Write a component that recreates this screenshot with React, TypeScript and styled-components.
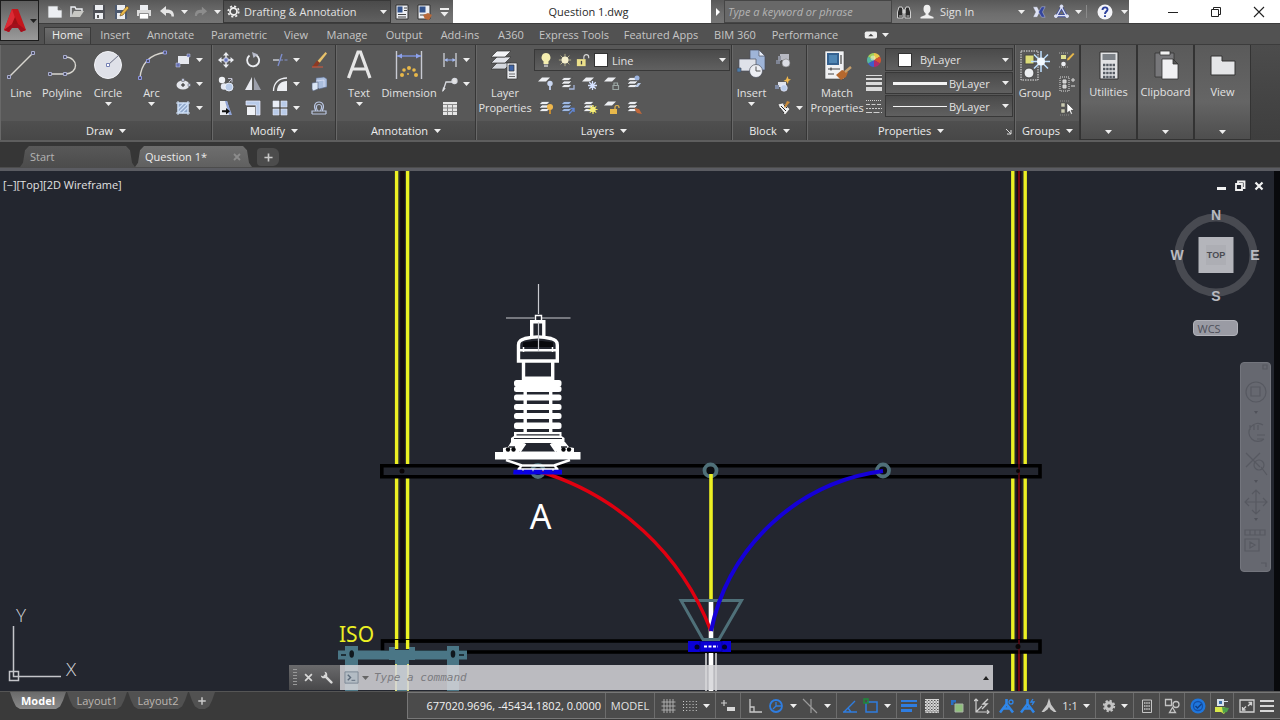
import React from 'react';
import styled, { createGlobalStyle, css } from 'styled-components';

const GlobalStyle = createGlobalStyle`
  *, *::before, *::after { box-sizing: border-box; }
  html, body { margin: 0; background: #3a3a3a; }
  body, button, input, select {
    font-family: "Open Sans", "Noto Sans", sans-serif;
    font-size: 11px;
    line-height: 15px;
    color: #e2e2e2;
  }
  button, input, select { margin: 0; padding: 0; border: 0; background: none; border-radius: 0; }
  button { display: flex; align-items: center; justify-content: center; flex: none; }
  svg { display: block; flex: none; }
`;

/* ---------- icons ---------- */

const W = '#eceef2';
const B = '#b9cbe8';
const G = '#c9c9c9';
const Y = '#e8b84a';

const stack = (top: string) => (
  <g fill={top} stroke="#2e2e2e" strokeWidth=".5">
    <path d="M4 9.500h8l-3 3H1z" />
    <path d="M4 6h8l-3 3H1z" />
    <path d="M4 2.500h8l-3 3H1z" />
  </g>
);

const art: Record<string, React.ReactNode> = {
  newFile: <path d="M1 2h10l4 4v8H1z M11 2v4h4" fill={W} stroke="#777" strokeWidth=".7" />,
  open: (
    <g>
      <path d="M2 13V3h4l1 2h6v2" fill="none" stroke={W} strokeWidth="1.400" />
      <path d="M2 13l3-6h10l-4 6z" fill="#c8c8c4" />
    </g>
  ),
  save: (
    <g>
      <path d="M2 1h12v14H2z" fill="#4d4f55" />
      <path d="M4 1h8v5H4z M4 9h8v6H4z" fill={W} />
      <path d="M6 11h2v3H6z" fill="#555" />
    </g>
  ),
  saveAs: (
    <g>
      <path d="M2 1h12v14H2z" fill="#4d5a70" />
      <path d="M4 1h8v5H4z M4 9h8v6H4z" fill={W} />
      <path d="M7 12l1-3 6-7 2 2-6 7z" fill={Y} stroke="#6b4a18" strokeWidth=".6" />
    </g>
  ),
  print: (
    <g>
      <path d="M4 1h8v5H4z" fill={W} />
      <path d="M1 6h14v6H1z" fill="#dcdcdc" />
      <path d="M3.500 9.500h9V15h-9z" fill="#fff" stroke="#777" strokeWidth=".8" />
    </g>
  ),
  undo: <path d="M1 7l6-5v3.500c5 0 8 1 8 7h-2.500c0-3-2-3.500-5.500-3.500v3z" fill="#e4e4e4" />,
  redo: <path d="M15 7L9 2v3.500c-5 0-8 1-8 7h2.500c0-3 2-3.500 5.500-3.500v3z" fill="#8c8c8c" />,
  gear: (
    <g fill="none" stroke="#eee">
      <circle cx="8" cy="8" r="4.300" strokeWidth="2.200" />
      <circle cx="8" cy="8" r="6.500" strokeWidth="2" strokeDasharray="2.600 2.500" />
    </g>
  ),
  gearSolid: (
    <g fill="none" stroke="#c4c4c4">
      <circle cx="8" cy="8" r="3.300" strokeWidth="3" />
      <circle cx="8" cy="8" r="5.200" strokeWidth="2" strokeDasharray="2.200 1.880" />
    </g>
  ),
  sheet: (
    <g>
      <path d="M2 1h12v14H2z" fill={W} stroke="#333" />
      <path d="M3.500 2.500h5v6h-5z" fill="#33538c" />
      <path d="M10 4h3M10 6.500h3M4 10.500h8M4 13h8" stroke="#444" />
    </g>
  ),
  sheetBrush: (
    <g>
      <path d="M2 1h12v14H2z" fill={W} stroke="#333" />
      <path d="M3.500 2.500h6v6h-6z" fill="#33538c" />
      <path d="M4 11h5" stroke="#444" />
      <path d="M7 11l5-2 4 2-3 5-4-1z" fill="#b8693a" />
    </g>
  ),
  dropBar: <path d="M4 4h9v2H4z M4.500 8h8l-4 4.500z" fill="#eee" />,
  binoculars: (
    <g fill="#2c2c2c" stroke="#d0d0d0">
      <path d="M3 3h3l1 3v8H1.500V8z M10 3h3l1.500 5v6H9V6z" />
      <path d="M7 6h2v3H7z" fill="#d0d0d0" />
      <path d="M3 12h3M10.500 12h3" />
    </g>
  ),
  person: (
    <g fill="#eee">
      <ellipse cx="8" cy="5" rx="3.500" ry="4.200" />
      <path d="M6.500 8h3v3l5 2v1.500h-13V13l5-2z" />
    </g>
  ),
  exchange: (
    <g>
      <path d="M1 2h5l3 6-3 6H1l3-6z" fill="#dfe3f5" stroke="#555" strokeWidth=".5" />
      <path d="M15 2h-4L7.500 8l3.500 6h4l-3-6z" fill="#34459c" stroke="#cdd3ee" strokeWidth=".5" />
    </g>
  ),
  a360: (
    <g fill="none" stroke="#dfe3f5">
      <path d="M8 3.500L13 12.500H3z" strokeWidth="3" stroke="#3c4ca0" />
      <path d="M8 3.500L13 12.500H3z" strokeWidth="1.300" />
      <circle cx="8" cy="2.500" r="1.500" fill="#dfe3f5" />
      <circle cx="2" cy="13" r="1.500" fill="#dfe3f5" />
      <circle cx="14" cy="13" r="1.500" fill="#dfe3f5" />
    </g>
  ),
  help: (
    <g>
      <circle cx="8" cy="8" r="7.500" fill="#f4f4f8" />
      <path d="M5.500 6c0-3.500 5.500-3.300 5-.3C10.300 7.500 8 7.700 8 10M8 11.300v1.700" fill="none" stroke="#2b3f9b" strokeWidth="1.900" />
    </g>
  ),
  rectangle: (
    <g>
      <path d="M3 4h11v8H3z" fill="#e6e8ee" />
      <path d="M1 11h4v4H1z M12 2h3v3h-3z" fill="#6770b0" stroke="#c9d0f0" strokeWidth=".5" />
    </g>
  ),
  ellipse: (
    <g>
      <ellipse cx="8" cy="9" rx="6.500" ry="4.500" fill="#e4e6ec" />
      <path d="M6 9h4M8 7v4" stroke="#222" />
      <path d="M6.800 2.500h2.400v3H6.800z M13 7.800h2.500v2.500H13z" fill="#cfd6f0" stroke="#555" strokeWidth=".5" />
    </g>
  ),
  hatch: (
    <g stroke="#cfe0f7">
      <path d="M3 3h10v10H3z" fill="#8ea6c9" />
      <path d="M3 9l6-6M3 13L13 3M7 13l6-6" strokeWidth="1.200" />
      <path d="M1 3h14M1 13h14M3 1v14M13 1v14" />
    </g>
  ),
  move: (
    <g fill="#eceef2">
      <path d="M8 0l3 3.500H5z M8 16l3-3.500H5z M0 8l3.500-3v6z M16 8l-3.500-3v6z" />
      <path d="M7.300 3h1.400v10H7.300z M3 7.300h10v1.400H3z" />
      <path d="M6 6h4v4H6z" fill="#6a78c0" stroke="#dfe3f5" strokeWidth=".7" />
    </g>
  ),
  rotate: (
    <g fill="none">
      <path d="M4.500 3.500A6 6 0 1 0 11 3" stroke={W} strokeWidth="1.800" />
      <path d="M7 0l6 2.500L8.500 6z" fill="#b8bccb" />
    </g>
  ),
  trim: (
    <g fill="none">
      <path d="M1 8h6" stroke="#d6dae4" strokeWidth="1.300" />
      <path d="M8 8h8" stroke="#8090c8" strokeDasharray="3 1.500" />
      <path d="M6 14L10 2" stroke="#7f8fd0" strokeWidth="1.300" />
    </g>
  ),
  erase: (
    <g>
      <path d="M14.500 0L16 1.500 8.500 11 6.500 9z" fill="#e8c26a" />
      <path d="M6 8.500l3 2.500-3 3.500-5 .5z" fill="#8c3a24" />
      <path d="M1 15h11" stroke="#d8563a" />
    </g>
  ),
  copy: (
    <g>
      <circle cx="4" cy="4" r="3.200" fill="#f0f2f6" />
      <circle cx="6" cy="10.500" r="3.200" fill="#e4e8f2" />
      <circle cx="11" cy="11" r="4" fill={B} stroke="#f2f6ff" strokeWidth=".8" />
      <path d="M10 2.500h4v4M14 3l-3 3" fill="none" stroke="#ccd" strokeWidth=".9" />
    </g>
  ),
  mirror: (
    <g>
      <path d="M7 1v13H0z" fill="#e8eaf0" />
      <path d="M9 1v13h7z" fill="#9c9fab" />
    </g>
  ),
  fillet: (
    <g>
      <path d="M15 15H5C5 9 9 5 15 5z" fill="#eceef2" />
      <path d="M1.500 15C1.500 7 7 2 15 2" fill="none" stroke={W} strokeWidth="1.300" />
    </g>
  ),
  explode: (
    <g stroke="#54607a" strokeWidth=".6">
      <path d="M5 2l8-1 3 2v8l-8 2-3-3z" fill="#a9bddd" />
      <path d="M1 7l6-1v7l-5 2-1-2z" fill="#dbe6f6" />
      <path d="M5 5l8-1v7" fill="none" stroke="#eef" />
    </g>
  ),
  stretch: (
    <g>
      <path d="M2 1h7l4 14H2z" fill="#e9ebf0" />
      <path d="M9 1l5 14h-3L7 1z" fill="#8fa3d6" />
      <path d="M4 10.300h4V8l4 3.300L8 14.500v-2.200H4z" fill="#111" />
    </g>
  ),
  scale: (
    <g>
      <path d="M1 1h14v14h-4V5H1z" fill={B} stroke="#eef" strokeWidth=".7" />
      <path d="M2 7h8v8H2z" fill="#f0f2f6" />
    </g>
  ),
  array: (
    <g fill={B} stroke="#e4eaf8" strokeWidth=".6">
      <path d="M1 1h6v6H1z" fill="#e9edf5" />
      <path d="M9 1h6v6H9z M1 9h6v6H1z M9 9h6v6H9z" />
    </g>
  ),
  offset: (
    <g fill="none" stroke="#b9c6e2" strokeWidth="1.200">
      <path d="M1 14h14M1 14v-3h4C2 6 4 2 8 2s6 4 3 9h4v3" />
      <path d="M6.500 11C4 6 6 4.500 8 4.500S12 6 9.500 11z" />
    </g>
  ),
  linearDim: (
    <g fill="none" strokeWidth="1.200">
      <path d="M2 1v14M14 1v14" stroke="#d8dae0" />
      <path d="M3 8h10" stroke="#8aa3e8" />
      <path d="M2.500 8l3-2v4z M13.500 8l-3-2v4z" fill="#a8bbf0" />
    </g>
  ),
  leader: (
    <g fill="none" stroke="#d8dae0" strokeWidth="1.300">
      <path d="M1 15l3-9h7" />
      <circle cx="12.500" cy="5" r="2.500" fill="#e4e4e4" />
      <path d="M.5 15.500l.8-4 2 1z" fill="#e4e4e4" strokeWidth=".5" />
    </g>
  ),
  table: (
    <g>
      <path d="M1 2h14v13H1z" fill="#e6e6e6" />
      <path d="M1 4.500h14M1 8h14M1 11.500h14M5.500 5v10M10.500 5v10" stroke="#8a8a8a" />
    </g>
  ),
  bulb: (
    <g>
      <path d="M8 1a4.500 4.500 0 0 1 2.500 8.200V12h-5V9.200A4.500 4.500 0 0 1 8 1z" fill="#f6efb0" />
      <path d="M6 12.500h4v2.500H6z" fill="#b0b0b0" />
    </g>
  ),
  sun: (
    <g>
      <path d="M8 1v14M1 8h14M3 3l10 10M13 3L3 13" stroke="#b8b48c" strokeWidth="1.100" />
      <circle cx="8" cy="8" r="4" fill="#f6f0cc" />
    </g>
  ),
  lock: (
    <g>
      <path d="M9 7V4.500C9 1 14.500 1 14.500 4.500V6" fill="none" stroke="#d8d8d8" strokeWidth="1.300" />
      <path d="M1 7h10v8H1z" fill="#ece08a" />
      <path d="M5.500 9H7v4H5.500z" fill="#444" />
    </g>
  ),
  layOff: (
    <g>
      <path d="M4 2.500h8l-4 4H0z" fill={W} />
      <circle cx="12" cy="8.500" r="2.700" fill="#c9d6f0" />
      <path d="M11 11h2v4h-2z" fill="#b5c3e0" />
    </g>
  ),
  layIso: <g>{stack(W)}<path d="M14 10v4H9" fill="none" stroke="#a7b6da" strokeWidth="1.300" /></g>,
  layFreeze: (
    <g>
      <path d="M4 2.500h8l-4 4H0z" fill={W} />
      <path d="M10.500 6v9M6 10.500h9M7.300 7.300l6.400 6.400M13.700 7.300l-6.400 6.400" stroke="#d5e2ff" strokeWidth="1.300" />
    </g>
  ),
  layLock: (
    <g>
      <path d="M4 2.500h8l-4 4H0z" fill={W} />
      <path d="M10 10.500V8h3.500v2.500M9 10.500h5.500v4H9z" fill="none" stroke="#9aa6a3" strokeWidth="1.200" />
    </g>
  ),
  layCurrent: <g>{stack(W)}<circle cx="11" cy="3" r="2.500" fill="#9bb2dd" /><path d="M12 8h3l-3 4H9" fill={B} /></g>,
  layOn: <g>{stack(W)}<circle cx="12" cy="8" r="3" fill="#f0b74c" /><path d="M11 11h2v4h-2z" fill="#c48a30" /></g>,
  layUniso: <g>{stack('#9fb9e4')}<path d="M9 15l5-5M10.500 9.500H14V13" fill="none" stroke="#5f86d8" strokeWidth="1.400" /></g>,
  layThaw: (
    <g>
      {stack(W)}
      <path d="M11 6v9M6.500 10.500h9M7.800 7.300l6.400 6.400M14.200 7.300l-6.400 6.400" stroke="#f0e45c" strokeWidth="1.200" />
      <circle cx="11" cy="10.500" r="2.700" fill="#f7ef7a" />
    </g>
  ),
  layUnlock: (
    <g>
      <path d="M4 2.500h8l-4 4H0z" fill={W} />
      <path d="M11 10V8c0-2 4-2 4 0v1" fill="none" stroke={Y} strokeWidth="1.200" />
      <path d="M6 10h7v5H6z" fill={Y} />
    </g>
  ),
  layMatch: <g>{stack(W)}<path d="M8 9l5 1 3 5-5-1z" fill="#c0673a" /></g>,
  createBlock: (
    <g>
      <path d="M5 2h9v6H5z" fill="#b7b9c2" />
      <path d="M1 8h4v4H1z" fill="#7e8494" />
      <circle cx="11" cy="11" r="4" fill="#dcdde4" stroke="#777" strokeWidth=".6" />
      <path d="M3 4h3v5H3z" fill="#8f93a0" />
    </g>
  ),
  editBlock: (
    <g>
      <path d="M3 6h8v5H3z" fill="#dfe2ea" />
      <path d="M0 9h4v4H0z" fill="#7e8aa4" />
      <circle cx="9" cy="12" r="3.300" fill={B} stroke="#eef" strokeWidth=".6" />
      <path d="M12.500 0l1 3 2.500.5-2.500 1.500-.5 3-1.500-2.500L8.500 5l2.500-1.500z" fill="#f0b74c" />
    </g>
  ),
  attributes: (
    <g>
      <path d="M3 4l5-1 7 6-5 6-5-6z" fill="#f0f0f0" stroke="#333" strokeWidth=".6" />
      <path d="M6 6l5 5M8.500 4.500L12 8M5 8l4 5" stroke="#222" />
      <path d="M12 1l3 1-5 6-1-1z" fill="#c98a3a" />
    </g>
  ),
  colorWheel: (
    <g>
      <path d="M8 8V1a7 7 0 0 1 6 3.500z" fill="#e8c84a" />
      <path d="M8 8l6-3.500a7 7 0 0 1 0 7z" fill="#d8542f" />
      <path d="M8 8l6 3.500A7 7 0 0 1 8 15z" fill="#b02a6c" />
      <path d="M8 8v7a7 7 0 0 1-6-3.500z" fill="#3e5ecc" />
      <path d="M8 8l-6 3.500a7 7 0 0 1 0-7z" fill="#55b6a2" />
      <path d="M8 8L2 4.500A7 7 0 0 1 8 1z" fill="#9fcf5a" />
      <circle cx="7" cy="6" r="2.500" fill="#fff" opacity=".45" />
    </g>
  ),
  weight: <path d="M0 0h16v1H0z M0 3h16v2H0z M0 7h16v3H0z M0 12h16v4H0z" fill="#dadada" />,
  linetype: (
    <g stroke="#cfcfcf">
      <path d="M0 2.500h16" strokeDasharray="1 1" />
      <path d="M0 6.500h16" strokeDasharray="4 1.500" />
      <path d="M0 10.500h16" strokeDasharray="2 1" />
      <path d="M0 14.500h16" strokeDasharray="6 1.500" />
    </g>
  ),
  groupEdit: (
    <g>
      <path d="M2 3h5v4H2z" fill="#dfe090" />
      <circle cx="4.500" cy="12" r="2.300" fill={W} />
      <path d="M0 1h9M0 15h9" stroke="#aaa" strokeDasharray="1 1" />
      <path d="M15.500 2L10 8l-2 .5.500-2L14 1z" fill={Y} />
    </g>
  ),
  groupAdd: (
    <g fill="none" stroke="#ddd">
      <path d="M1 1h9v14H1z" strokeDasharray="1 1" />
      <path d="M4 4h3v3H4z M4 9h3v3H4z" fill="#ccc" />
      <path d="M12 4h4M14 2v4M12 10h4" />
    </g>
  ),
  groupSelect: (
    <g>
      <path d="M1 1h9M1 15h9" stroke="#888" strokeDasharray="1 1" />
      <path d="M2 3h4v4H2z M2 9h4v4H2z" fill="#c9c9b0" stroke="#444" strokeWidth=".5" />
      <path d="M8 3l7 7-3 .3 1.500 3.500-1.500.6L10.500 11 8 13z" fill="#fff" stroke="#333" strokeWidth=".5" />
    </g>
  ),
  wrench: (
    <g>
      <path d="M6 6l8 8" stroke="#d8d8d8" strokeWidth="3" strokeLinecap="round" />
      <path d="M5.500 1A4 4 0 1 1 1 5.500l2.500 1 2.500-.5.500-2.500z" fill="#d8d8d8" />
    </g>
  ),
  close: <path d="M2 2l12 12M14 2L2 14" stroke="#d8d8d8" strokeWidth="3" />,
  prompt: (
    <g fill="none" stroke="#5c6a7a">
      <path d="M1 2h14v12H1z" fill="#b3bcc4" stroke="#7c8894" />
      <path d="M4 5l3 3-3 3" strokeWidth="1.500" />
      <path d="M8 11h4" />
    </g>
  ),
  grid: <path d="M4 1v14M7 1v14M10 1v14M13 1v14M1.500 4h14M1.500 8h14M1.500 12h14" stroke="#b4b4b4" strokeWidth=".9" />,
  snap: (
    <path d="M1 3.500h14M1 6.500h14M1 9.500h14M1 12.500h14" stroke="#cfcfcf" strokeDasharray="1 2.200" />
  ),
  infer: (
    <g>
      <path d="M1 5h6M4 2v6" stroke="#ccc" strokeWidth="1.200" />
      <path d="M7 9h8v4H7z" fill="#d8d8d8" />
    </g>
  ),
  ortho: <path d="M3 1v13h12M3 9h4v5" fill="none" stroke={G} strokeWidth="1.300" />,
  polar: (
    <g fill="none" stroke="#2f7de0" strokeWidth="1.800">
      <circle cx="8" cy="8" r="6" />
      <path d="M8 4v4h6M8 8l-3 3" strokeWidth="1.300" />
    </g>
  ),
  isodraft: <path d="M1 1l14 14M9 1v14" fill="none" stroke="#9a9a9a" strokeWidth="1.200" />,
  track: <path d="M1 14h14M2 14L13 3M9 14l-3-4" fill="none" stroke="#2f7de0" strokeWidth="1.400" />,
  osnap: (
    <g fill="none">
      <path d="M4 4h10v10H3V5" stroke="#2f7de0" strokeWidth="1.500" />
      <path d="M1 1h4v4H1z" stroke="#1f8a3c" strokeWidth="1.500" />
    </g>
  ),
  lwt: <path d="M0 2h16v2H0z M0 6h16v3H0z M0 11h11v3H0z" fill="#2f7de0" />,
  transparency: (
    <g>
      <path d="M1 1h14v14H1z" fill="#d6d6d6" />
      <path d="M1 2.500h14M1 5.500h14M1 8.500h14M1 11.500h14M1 14h14" stroke="#555" strokeDasharray="1.500 1.500" />
      <path d="M2.500 4h12.500M2.500 7h12.500M2.500 10h12.500M2.500 13h12.500" stroke="#777" strokeDasharray="1.500 1.500" />
    </g>
  ),
  cycling: (
    <g>
      <path d="M6 6h8v8H6z" fill="#8fbf7c" stroke="#a9b4a4" />
      <path d="M2 2h5v2.500H4.500V7H2z" fill="#2a6fc4" />
    </g>
  ),
  ducs: (
    <g fill="none" stroke="#cfcfcf">
      <path d="M2 1v13h13M0 3l2-2 2 2M13 12l2 2-2 2M2 14L8 8" strokeWidth="1.200" />
      <path d="M14 1l-5 5h4l-5 5" strokeWidth="1.400" />
    </g>
  ),
  annoVis: (
    <g stroke="#2f86e8" strokeWidth="2.600" fill="none">
      <path d="M7.500 1v6M7.500 6L1 14.500M7.500 6L14 14.500M4 10.500h7" />
      <circle cx="12" cy="4" r="2" strokeWidth="1.300" />
    </g>
  ),
  annoAuto: (
    <g stroke="#2f86e8" strokeWidth="2.600" fill="none">
      <path d="M7.500 1v6M7.500 6L1 14.500M7.500 6L14 14.500M4 10.500h7" />
      <path d="M13 1l-2 3h3l-2 3" strokeWidth="1.300" />
    </g>
  ),
  annoScale: <path d="M8 0l2 6.500L15.500 14H13l-3.500-2.500L8 9l-1.500 2.500L3 14H.5L6 6.500z" fill="#c6c6c6" />,
  units: (
    <g stroke="#c4c4c4" fill="none">
      <path d="M3.500 2h9v12.500h-9z" />
      <path d="M5 5h6M5 8h6M5 11h6" strokeDasharray="1.500 .7" strokeWidth="1.500" />
    </g>
  ),
  isolate: (
    <g fill="none" stroke="#c4c4c4" strokeWidth="1.300">
      <path d="M1.500 1.500h6v6h-6z M5.500 14.500l3-5 3 5z" />
      <circle cx="12" cy="6.500" r="3" />
    </g>
  ),
  hardware: (
    <g>
      <circle cx="8" cy="8" r="7.500" fill="#1f76dc" />
      <circle cx="8" cy="8" r="4.500" fill="none" stroke="#1450a8" strokeWidth="1.300" />
      <path d="M5.500 8l2 2 4-4" fill="none" stroke="#123f84" strokeWidth="1.500" />
    </g>
  ),
  plotter: (
    <g>
      <path d="M3 1h7v7H3z" fill="#d6e0ea" />
      <path d="M5 3h3v3H5z" fill="#3b6ea8" />
      <path d="M9 3.500h5" stroke="#d6e0ea" />
      <path d="M1 9h9l3 2-3 5-3-2H1z" fill="#d8e84a" />
      <path d="M8 9l7 1-2 4-4 1z" fill="#4ea04a" />
    </g>
  ),
  clean: (
    <g fill="none" stroke="#d2d2d2" strokeWidth="1.300">
      <path d="M1 2h14v12H1z" />
      <path d="M9 8l3.500-3.500M9.500 4.500h3v3M7 8.500L3.500 12M3.500 9v3h3" />
    </g>
  ),
  menu: <path d="M1 3h14M1 8h14M1 13h14" stroke="#d6d6d6" strokeWidth="2" />,
  winMin: <path d="M3 8.500h10" stroke="#222" />,
  winMax: <path d="M3.500 5.500h7v7h-7z M5.500 5.500v-2h7v7h-2" fill="none" stroke="#222" />,
  winClose: <path d="M3 3l10 10M13 3L3 13" stroke="#222" strokeWidth="1.100" />,
  docMin: <path d="M4 9h9v3H4z" fill="#f2f2f2" />,
  docMax: (
    <path d="M4 6h6v6H4z M6 5V3.500h6.500v6.500H11" fill="none" stroke="#f2f2f2" strokeWidth="1.800" />
  ),
  docClose: <path d="M4.500 4.500l7 7M11.500 4.500l-7 7" stroke="#f2f2f2" strokeWidth="2.200" />,
  plus: <path d="M8 3v10M3 8h10" stroke="#c9c9c9" strokeWidth="2" />,
  record: (
    <g>
      <path d="M4 4h10a2 2 0 0 1 2 2v4a2 2 0 0 1-2 2H4a2 2 0 0 1-2-2V6a2 2 0 0 1 2-2z" fill="#eee" />
      <path d="M6 9.500L9 6.500l3 3z" fill="#444" />
    </g>
  ),
};

const bigArt: Record<string, React.ReactNode> = {
  line: (
    <g fill="#4c4f68" stroke="#a9adcf">
      <path d="M4 28L28 4" stroke="#d8d6cf" strokeWidth="1.400" />
      <path d="M2.500 26.500h3v3h-3z M26.500 2.500h3v3h-3z" />
    </g>
  ),
  polyline: (
    <g fill="#4c4f68" stroke="#a9adcf">
      <path d="M4 25h15c14 0 14-17 0-17" fill="none" stroke="#d8d6cf" strokeWidth="1.400" />
      <path d="M2.500 23.500h3v3h-3z M17.500 23.500h3v3h-3z M17.500 6.500h3v3h-3z" />
    </g>
  ),
  circle: (
    <g>
      <circle cx="16" cy="16" r="13.500" fill="#dfe1e8" stroke="#f3f4f8" />
      <path d="M16 16L27 6" stroke="#6c7086" />
      <path d="M14.500 14.500h3v3h-3z" fill="#fff" stroke="#7480b4" />
    </g>
  ),
  arc: (
    <g fill="#4c4f68" stroke="#8d96e0">
      <path d="M4 29C5 15 14 5 29 3.500" fill="none" stroke="#d8d6cf" strokeWidth="1.400" />
      <path d="M2.500 27.500h3v3h-3z M10.500 10.500h3v3h-3z M27.500 2h3v3h-3z" />
    </g>
  ),
  text: <path d="M5.500 29L15 3h2.500L27 29M9 20h14.500" fill="none" stroke="#e6e6e6" strokeWidth="3.200" />,
  dimension: (
    <g>
      <path d="M3.500 2v28M28.500 2v28" stroke="#c8cad2" strokeWidth="1.400" />
      <path d="M4 7h24" stroke="#7d92e0" strokeWidth="1.400" />
      <path d="M4 7l5-2.500v5z M28 7l-5-2.500v5z" fill="#8ea2ea" />
      <g fill={Y}>
        <circle cx="16" cy="19" r="2" /><circle cx="11" cy="21" r="1.800" /><circle cx="21" cy="21" r="1.800" />
        <circle cx="9" cy="26" r="2" /><circle cx="23" cy="26" r="2" /><circle cx="15" cy="25" r="1" />
      </g>
    </g>
  ),
  layers: (
    <g stroke="#333" strokeWidth=".7">
      <path d="M8 14h14l-6 6H2z" fill="#d5d8de" />
      <path d="M8 8h14l-6 6H2z" fill="#e2e4ea" />
      <path d="M8 2h14l-6 6H2z" fill="#f2f3f6" />
      <path d="M18 14h10v16H18z" fill="#e8eaee" />
      <path d="M20 16h5v6h-5z" fill="#3e64a8" />
      <path d="M20 25h6M20 27.500h6" stroke="#333" />
    </g>
  ),
  insert: (
    <g stroke="#4a4f5c" strokeWidth=".7">
      <path d="M14 1h9l6 6v14H14z" fill="#9fb5d8" />
      <path d="M23 1v6h6z" fill="#e8eefa" />
      <path d="M3 10h17v12H3z" fill="#dfe2e9" />
      <path d="M1 19h4v4H1z" fill="#4b7ca8" />
      <circle cx="20" cy="22" r="6.500" fill="#eceef3" />
      <path d="M20 22v-4.500M20 22h4.500" stroke="#555" strokeWidth="1" />
    </g>
  ),
  match: (
    <g>
      <path d="M4 2h19v28H4z" fill="#f0f1f3" stroke="#444" strokeWidth=".6" />
      <path d="M6 4h12v12H6z" fill="#35618f" />
      <path d="M8 6h8v8H8z" fill="#4f86b4" />
      <path d="M20 6v9M7 20h12M10 18.500v3M7 25h6" stroke="#444" strokeWidth="1.200" />
      <path d="M15 26l6-5 6 2-2 5-5 3z" fill="#b5682e" />
      <path d="M24 23l6-5" stroke="#c8a06c" strokeWidth="2.400" />
    </g>
  ),
  group: (
    <g>
      <path d="M2 2h17v29H2z" fill="none" stroke="#e2e2e2" strokeDasharray="1.500 1" />
      <path d="M6 6h9v9H6z" fill="#dcdc78" stroke="#444" />
      <circle cx="10" cy="24" r="5" fill="#eceef0" stroke="#444" />
      <path d="M22 2v21M12 12.500h19M15 5.500l14 14M29 5.500l-14 14" stroke="#bfe0ff" strokeWidth="1.500" />
      <circle cx="22" cy="12.500" r="4" fill="#f2f9ff" />
    </g>
  ),
  utilities: (
    <g>
      <path d="M7 2h18v27H7z" fill="#e2e3e5" stroke="#333" />
      <path d="M9.500 4h13v6h-13z" fill="#7d8288" />
      <path d="M10 15h12M10 19h12M10 23h12M10 27h12" stroke="#555b63" strokeWidth="2.400" strokeDasharray="2.400 .8" />
    </g>
  ),
  clipboard: (
    <g stroke="#333" strokeWidth=".8">
      <path d="M5 3h19v24H5z" fill="#77777a" />
      <path d="M10 1h10v4H10z" fill="#f2f2f2" />
      <path d="M12 9h11l5 5v15H12z" fill="#f1f1f3" />
      <path d="M23 9v5h5z" fill="#555" />
    </g>
  ),
  view: <path d="M4 6h11v5h13v14H4z" fill="#e4e5e7" stroke="#333" />,
};

const Icon = ({ name, size = 16 }: { name: string; size?: number }) => (
  <svg width={size} height={size} viewBox="0 0 16 16" aria-hidden="true">{art[name]}</svg>
);
const BigIcon = ({ name }: { name: string }) => (
  <svg width="32" height="32" viewBox="0 0 32 32" aria-hidden="true">{bigArt[name]}</svg>
);
const Caret = ({ color = '#eee' }: { color?: string }) => (
  <svg width="7" height="4" viewBox="0 0 7 4" aria-hidden="true"><path d="M0 0h7L3.500 4z" fill={color} /></svg>
);

/* ---------- page frame ---------- */

const Page = styled.div`
  display: flex;
  flex-direction: column;
  min-height: 100vh;
  min-width: 1080px;
`;

const Header = styled.header`
  display: flex;
  align-items: flex-start;
  background: #525252;
`;

const AppButton = styled.button`
  width: 39px;
  height: 41px;
  gap: 3px;
  background: linear-gradient(#5e5e5e, #9a9a9a);
  border: 1px solid #1c1c1c;
`;

const HeaderRows = styled.div`
  flex: 1;
  min-width: 0;
`;

const TitleBar = styled.div`
  display: flex;
  align-items: stretch;
  height: 24px;
  background: linear-gradient(#585858, #6e6e6e 60%, #757575);
  border-bottom: 1px solid #3c3c3c;
`;

const QuickAccess = styled.div`
  display: flex;
  align-items: center;
  padding-left: 5px;
`;

const QuickButton = styled.button<{ $w?: number }>`
  width: ${(p) => p.$w ?? 22}px;
  height: 23px;
`;

const Divider = styled.span`
  width: 1px;
  height: 13px;
  margin: 5px 4px;
  background: #8a8a8a;
`;

const Combo = styled.label<{ $w?: number; $h: number; $gap?: number; $pad?: number }>`
  display: flex;
  align-items: center;
  gap: ${(p) => p.$gap ?? 4}px;
  ${(p) => p.$w && css`width: ${p.$w}px;`}
  height: ${(p) => p.$h}px;
  padding: 0 3px 0 ${(p) => p.$pad ?? 3}px;
  background: linear-gradient(#4a4a4a, #606060);
  border: 1px solid #383838;
`;

const Select = styled.select`
  appearance: none;
  flex: 1;
  min-width: 0;
  height: 100%;
  outline: none;
`;

const DocTitle = styled.h1`
  flex: 1;
  margin: 0;
  padding-left: 13px;
  background: #fff;
  color: #2a2a2a;
  font-size: 11px;
  font-weight: 400;
  line-height: 24px;
  text-align: center;
`;

const SearchInput = styled.input`
  width: 168px;
  padding: 0 3px;
  background: #686868;
  border: 1px solid #454545;
  font-style: italic;
  outline: none;
  &::placeholder { color: #b4b4b4; opacity: 1; }
`;

const SignIn = styled.button`
  width: 114px;
  gap: 5px;
  justify-content: flex-start;
  padding: 0 5px 0 3px;
  & > span { flex: 1; text-align: left; }
`;

const WindowControls = styled.div`
  display: flex;
  justify-content: flex-end;
  width: 151px;
  background: #fff;
`;

const WindowButton = styled.button`
  width: 43px;
  height: 23px;
`;

const RibbonTabs = styled.nav`
  display: flex;
  align-items: flex-end;
  height: 20px;
  padding-left: 5px;
`;

const RibbonTab = styled.button<{ $w: number; $active?: boolean }>`
  width: ${(p) => p.$w}px;
  height: 17px;
  padding-bottom: 3px;
  color: #c6c6c6;
  border: 1px solid transparent;
  border-bottom: 0;
  ${(p) => p.$active && css`
    color: #eee;
    background: linear-gradient(#6c6c6c, #585858);
    border-color: #3a3a3a;
  `}
`;

/* ---------- ribbon ---------- */

const Ribbon = styled.div`
  display: flex;
  background: linear-gradient(#4c4c4c, #3e3e3e);
  border-top: 1px solid #3c3c3c;
  border-bottom: 2px solid #5e5e5e;
`;

const Panel = styled.section<{ $w: number }>`
  display: flex;
  flex-direction: column;
  width: ${(p) => p.$w}px;
  flex: none;
  background: #585858;
  border-left: 1px solid #686868;
  border-right: 1px solid #363636;
`;

const PanelBody = styled.div`
  display: flex;
  height: 76px;
`;

const PanelTitle = styled.button`
  position: relative;
  width: 100%;
  height: 19px;
  gap: 6px;
  color: #ececec;
  background: linear-gradient(#4f4f4f, #474747);
`;

const Launcher = styled.span`
  position: absolute;
  right: 2px;
  bottom: 5px;
`;

const BigTool = styled.button<{ $w: number }>`
  flex-direction: column;
  justify-content: flex-start;
  width: ${(p) => p.$w}px;
  padding-top: 4px;
  white-space: pre-line;
  & > span { margin: 4px 0 2px; }
`;

const ToolColumns = styled.div`
  display: flex;
  padding-top: 3px;
`;

const SmallTool = styled.button<{ $caret?: boolean }>`
  justify-content: flex-start;
  gap: 5px;
  width: ${(p) => (p.$caret ? 39 : 27)}px;
  height: 24px;
  padding-left: 5px;
`;

const LayerStack = styled.div`
  display: flex;
  flex-direction: column;
  padding: 4px 0 0 1px;
`;

const LayerRow = styled.div`
  display: flex;
  padding-left: 1px;
`;

const LayerTool = styled.button`
  width: 22px;
  height: 24px;
`;

const PropertyList = styled.div`
  display: flex;
  flex-direction: column;
  gap: 1px;
  padding-top: 3px;
`;

const PropertyRow = styled.div`
  display: flex;
  align-items: center;
  gap: 3px;
`;

const Swatch = styled.span<{ $m?: number }>`
  width: 14px;
  height: 14px;
  margin-left: ${(p) => p.$m ?? 0}px;
  background: #fff;
  border: 1px solid #333;
`;

const Rule = styled.span<{ $h: number }>`
  width: 54px;
  height: ${(p) => p.$h}px;
  background: #f4f4f4;
`;

const FoldedPanel = styled.button<{ $w: number }>`
  flex-direction: column;
  justify-content: flex-start;
  align-self: stretch;
  width: ${(p) => p.$w}px;
  padding-top: 5px;
  background: linear-gradient(#5a5a5a, #656565 60%, #4e4e4e);
  border: 1px solid #333;
  border-top: 0;
  & > span { margin: 2px 0 31px; }
`;

/* ---------- file tabs ---------- */

const FileTabs = styled.div`
  display: flex;
  align-items: flex-end;
  height: 26px;
  padding-left: 20px;
  background: #363636;
  border-bottom: 1px solid #4c4c4c;
`;

const FileTab = styled.button<{ $w: number; $active?: boolean }>`
  justify-content: space-between;
  width: ${(p) => p.$w}px;
  height: 21px;
  padding: 0 11px 0 10px;
  color: ${(p) => (p.$active ? '#ececec' : '#b4b4b4')};
  background: ${(p) => (p.$active ? 'linear-gradient(#6e6e6e, #606060)' : 'linear-gradient(#585858, #4c4c4c)')};
  clip-path: polygon(0 100%, 3px 80%, 5px 20%, 9px 0, calc(100% - 9px) 0, calc(100% - 5px) 20%, calc(100% - 3px) 80%, 100% 100%);
`;

const AddTab = styled.button`
  width: 22px;
  height: 18px;
  margin: 0 0 1px 5px;
  background: #4c4c4c;
  border-radius: 4px 6px 6px 4px;
`;

/* ---------- drawing area ---------- */

const Viewport = styled.main`
  position: relative;
  flex: 1;
  min-height: 440px;
  overflow: hidden;
  background: #23262f;
  border-top: 3px solid #5b5c62;
  &::after {
    content: "";
    position: absolute;
    inset: 0 0 0 auto;
    width: 6px;
    background: #08090c;
  }
`;

const Drawing = styled.svg`
  position: absolute;
  inset: 0;
  width: 100%;
  height: 100%;
`;

const ViewLabels = styled.div`
  position: absolute;
  left: 3px;
  top: 6px;
  display: flex;
`;

const DocControls = styled.div`
  position: absolute;
  right: 13px;
  top: 7px;
  display: flex;
  gap: 3px;
`;

const ViewCube = styled.div`
  position: absolute;
  right: 19px;
  top: 34px;
  display: flex;
  flex-direction: column;
  align-items: center;
  gap: 17px;
`;

const WcsButton = styled.button`
  width: 45px;
  height: 16px;
  padding-left: 4px;
  justify-content: flex-start;
  color: #4e505a;
  background: #9a9ba4;
  border: 1px solid #b2b3ba;
  border-radius: 4px;
`;

const NavBar = styled.div`
  position: absolute;
  right: 9px;
  top: 191px;
  width: 31px;
  height: 210px;
  background: #666870;
  border: 1px solid #73757d;
  border-radius: 4px;
`;

const UcsIcon = styled.svg`
  position: absolute;
  left: 0;
  bottom: 0;
`;

const CommandLine = styled.form`
  position: absolute;
  left: 50%;
  bottom: 1px;
  display: flex;
  width: 55%;
  height: 25px;
  margin: 0 0 0 1px;
  transform: translateX(-50%);
`;

const CommandTools = styled.div`
  display: flex;
  align-items: center;
  gap: 7px;
  width: 51px;
  padding-left: 4px;
  background: linear-gradient(#6a6a6c, #48484a);
`;

const Grip = styled.span`
  width: 4px;
  height: 17px;
  background: repeating-linear-gradient(#999 0 1px, transparent 1px 3px);
`;

const CommandField = styled.div`
  display: flex;
  flex: 1;
  align-items: center;
  gap: 3px;
  padding: 0 4px;
  background: rgba(214, 214, 217, 0.85);
`;

const CommandInput = styled.input`
  flex: 1;
  min-width: 0;
  padding-left: 2px;
  color: #333;
  font-family: "DejaVu Sans Mono", monospace;
  font-style: italic;
  outline: none;
  &::placeholder { color: #7c7c80; opacity: 1; }
`;

/* ---------- status bar ---------- */

const Footer = styled.footer`
  display: flex;
  align-items: flex-start;
  justify-content: space-between;
  height: 29px;
  background: #3a3a3a;
  border-top: 1px solid #555;
`;

const LayoutTabs = styled.nav`
  display: flex;
  gap: 1px;
  padding-left: 10px;
`;

const LayoutTab = styled.button<{ $w: number; $active?: boolean }>`
  width: ${(p) => p.$w}px;
  height: 17px;
  color: ${(p) => (p.$active ? '#fff' : '#bdb6b0')};
  font-weight: ${(p) => (p.$active ? 700 : 400)};
  background: ${(p) => (p.$active ? 'linear-gradient(#6a6a6a, #8a8a8a)' : '#515151')};
  clip-path: polygon(0 0, 100% 0, calc(100% - 3px) 50%, calc(100% - 6px) 85%, calc(100% - 10px) 100%, 10px 100%, 6px 85%, 3px 50%);
`;

const StatusTools = styled.div`
  display: flex;
  height: 27px;
  background: #4b4b4b;
  border: 1px solid #777;
  border-right: 0;
`;

const StatusGroup = styled.div<{ $w: number; $end?: boolean }>`
  display: flex;
  align-items: center;
  justify-content: ${(p) => (p.$end ? 'flex-end' : 'space-evenly')};
  width: ${(p) => p.$w}px;
  padding-right: ${(p) => (p.$end ? 4 : 0)}px;
  white-space: nowrap;
  color: #f2f2f2;
  & + & { border-left: 1px solid #6c6c6c; }
`;

/* ---------- data ---------- */

const quickButtons: [string, string, number?][] = [
  ['New', 'newFile'], ['Open', 'open'], ['Save', 'save'], ['Save As', 'saveAs'], ['Plot', 'print', 24], ['Undo', 'undo'],
];

const ribbonTabs: [string, number][] = [
  ['Home', 47], ['Insert', 48], ['Annotate', 63], ['Parametric', 74], ['View', 40], ['Manage', 62], ['Output', 52],
  ['Add-ins', 60], ['A360', 42], ['Express Tools', 84], ['Featured Apps', 90], ['BIM 360', 58], ['Performance', 82],
];

type Tool = [string, string, boolean?];

const drawTools: Tool[][] = [[['Rectangle', 'rectangle', true], ['Ellipse', 'ellipse', true], ['Hatch', 'hatch', true]]];
const modifyTools: Tool[][] = [
  [['Move', 'move'], ['Copy', 'copy'], ['Stretch', 'stretch']],
  [['Rotate', 'rotate'], ['Mirror', 'mirror'], ['Scale', 'scale']],
  [['Trim', 'trim', true], ['Fillet', 'fillet', true], ['Array', 'array', true]],
  [['Erase', 'erase'], ['Explode', 'explode'], ['Offset', 'offset']],
];
const annotationTools: Tool[][] = [[['Linear', 'linearDim', true], ['Leader', 'leader', true], ['Table', 'table']]];
const blockTools: Tool[][] = [[['Create', 'createBlock'], ['Edit', 'editBlock'], ['Edit Attributes', 'attributes', true]]];
const groupTools: Tool[][] = [[['Group Edit', 'groupEdit'], ['Add/Remove', 'groupAdd'], ['Group Selection', 'groupSelect']]];

const layerTools = [
  ['layOff', 'layIso', 'layFreeze', 'layLock', 'layCurrent'],
  ['layOn', 'layUniso', 'layThaw', 'layUnlock', 'layMatch'],
];

const statusGroups: { w: number; items: string[] }[] = [
  { w: 61, items: ['grid', 'snap', 'caret'] },
  { w: 25, items: ['infer'] },
  { w: 96, items: ['ortho', 'polar', 'caret', 'isodraft', 'caret'] },
  { w: 60, items: ['track', 'osnap', 'caret'] },
  { w: 24, items: ['lwt'] },
  { w: 23, items: ['transparency'] },
  { w: 26, items: ['cycling'] },
  { w: 24, items: ['ducs'] },
  { w: 102, items: ['annoVis', 'annoAuto', 'annoScale', '1:1', 'caret'] },
  { w: 38, items: ['gearSolid', 'caret'] },
  { w: 26, items: ['units'] },
  { w: 25, items: ['isolate'] },
  { w: 26, items: ['hardware'] },
  { w: 23, items: ['plotter'] },
  { w: 47, items: ['clean', 'menu'] },
];

/* ---------- parts ---------- */

const Columns = ({ columns }: { columns: Tool[][] }) => (
  <ToolColumns>
    {columns.map((col, i) => (
      <div key={i}>
        {col.map(([label, icon, caret]) => (
          <SmallTool key={label} aria-label={label} $caret={caret}>
            <Icon name={icon} />
            {caret && <Caret />}
          </SmallTool>
        ))}
      </div>
    ))}
  </ToolColumns>
);

const Big = ({ label, icon, w, caret }: { label: string; icon: string; w: number; caret?: boolean }) => (
  <BigTool $w={w}>
    <BigIcon name={icon} />
    <span>{label}</span>
    {caret && <Caret />}
  </BigTool>
);

const RibbonPanel = ({ title, w, launcher, children }: { title: string; w: number; launcher?: boolean; children: React.ReactNode }) => (
  <Panel $w={w}>
    <PanelBody>{children}</PanelBody>
    <PanelTitle>
      {title}
      <Caret />
      {launcher && (
        <Launcher>
          <svg width="6" height="6" viewBox="0 0 6 6" aria-hidden="true">
            <path d="M0 0l5 5M5 1v4H1" fill="none" stroke="#ddd" />
          </svg>
        </Launcher>
      )}
    </PanelTitle>
  </Panel>
);

const steel = '#4f7079';
const yellow = '#ecf023';

const Model = () => (
  <Drawing viewBox="0 171 1280 520" preserveAspectRatio="xMidYMid slice" role="img" aria-label="Model space">
    {/* conductors running down the sheet */}
    <g fill="none">
      <path d="M402.500 170V652" stroke="#160b12" strokeWidth="4.500" />
      <path d="M396.600 170V652M407.600 170V652" stroke={yellow} strokeWidth="3.400" />
      <path d="M1019 170V691" stroke="#1a0a12" strokeWidth="5" />
      <path d="M1019 170V691" stroke="#8a0614" strokeWidth="1.600" />
      <path d="M1012.800 170V691M1025.200 170V691" stroke={yellow} strokeWidth="3.400" />
    </g>
    {/* beams */}
    <g fill="#23262f" stroke="#000" strokeWidth="3.600">
      <path d="M381.800 465.800H1040V476.800H381.800z" />
      <path d="M382.500 641H1040V652H382.500z" />
    </g>
    <path d="M1019 464V479M1019 640V654" stroke="#5a0812" strokeWidth="1.600" />
    <g fill="#0a0506">
      <circle cx="402" cy="471" r="2.500" />
      <circle cx="1018" cy="471" r="2" />
      <circle cx="1018" cy="646.500" r="2.500" />
    </g>
    {/* terminals */}
    <g fill="#0b0c10" stroke={steel} strokeWidth="3.800">
      <circle cx="538" cy="471" r="6" />
      <circle cx="710.500" cy="470.500" r="6" />
      <circle cx="883" cy="470.500" r="6" />
    </g>
    <path d="M711 474V602" stroke={yellow} strokeWidth="3.600" />
    <path d="M711 602V640M711 653V691" stroke="#fff" strokeWidth="4.600" />
    <path d="M706 653V691M716 653V691" stroke="#fff" strokeWidth="1.300" />
    <path d="M681 600.500H741.500L719 639.500H703z" fill="none" stroke={steel} strokeWidth="3" />
    <path d="M538 471A265 265 0 0 1 711 631" fill="none" stroke="#e00010" strokeWidth="3.400" />
    <path d="M883 471A203 203 0 0 0 711 631" fill="none" stroke="#1500d8" strokeWidth="4" />
    <path d="M688 641H731V652H688z" fill="#0a00d6" />
    <path d="M700 641.500h22v10h-22z" fill="none" stroke="#0600a0" />
    <circle cx="697" cy="647" r="2.500" fill="#02022a" />
    <circle cx="724.500" cy="647" r="2.500" fill="#02022a" />
    <path d="M704 646.500h14" stroke="#fff" strokeWidth="2" strokeDasharray="3 1.500" />

    {/* insulator */}
    <g fill="none" stroke="#fff" strokeWidth="3.400">
      <path d="M531.700 337V321.700H543.800V337" />
      <path d="M518.500 361V345C518.500 341 521 340 525 338.500C533 336.500 543 336.500 551 338.500C555 340 557.300 341 557.300 345V361z" />
      <path d="M523.500 361V380M552.700 361V380" />
    </g>
    <path d="M523 342.500C532 340.500 544 340.500 553 342.500V347H523z" fill="#08090d" />
    <path d="M520 350.200H556" stroke="#fff" strokeWidth="2.600" />
    <path d="M523.500 347v5M552.500 347v5" stroke="#fff" strokeWidth="1.500" />
    <g fill="#fff">
      <path d="M522 376.500h32v5h-32z" />
      <rect x="514" y="380" width="47.500" height="6.500" rx="2.500" />
      <path d="M517 384h42v4h-42z" />
      <rect x="514" y="386" width="47.500" height="6" rx="2.500" />
      <rect x="514" y="394.500" width="47.500" height="6" rx="2.500" />
      <rect x="514" y="404" width="47.500" height="6" rx="2.500" />
      <rect x="514" y="413" width="47.500" height="6" rx="2.500" />
      <rect x="514" y="422.500" width="47.500" height="6.500" rx="2.500" />
      <path d="M523.500 390h3.400v43h-3.400z M549 390h3.400v43h-3.400z" />
      <path d="M514 432h47.500v4l3 2v5h-53.500v-5l3-2z" />
      <path d="M511 442h54l4 5 5 1v5h-71v-5l5-1z" />
      <path d="M495 452h85.500v7.500H495z" />
    </g>
    <path d="M516.500 434.800h43M514 438.500h48" stroke="#23262f" strokeWidth="1.200" />
    <path d="M524 443h28l5 8.500h-38z" fill="#23262f" />
    <path d="M525 443.500l-5.500 8M551 443.500l5.500 8" stroke="#fff" strokeWidth="3" />
    <path d="M509 447h6M561 447h6" stroke="#23262f" strokeWidth="1.600" />
    <g fill="#07080b">
      <circle cx="508" cy="449.500" r="2.200" /><circle cx="513.500" cy="449.500" r="2.200" />
      <circle cx="563.500" cy="449.500" r="2.200" /><circle cx="569" cy="449.500" r="2.200" />
    </g>
    <path d="M506 460L522 465.500H554L570 460M522 465l-4 5M554 465l4 5M518 469.500H558" fill="none" stroke="#fff" strokeWidth="2.400" />
    <path d="M513.500 472H562" stroke="#0a00e6" strokeWidth="4.500" strokeDasharray="9 1" />
    <path d="M513.500 473H562" stroke="#0a00e6" strokeWidth="2.500" />

    {/* crosshair */}
    <g fill="none" stroke="#c9cad0" strokeWidth="1.200">
      <path d="M538.500 284V314M538.500 322V351M506 318H534.500M541.500 318H570.500" />
      <path d="M535.500 315.500h6v6h-6z" stroke="#fff" strokeWidth="1.400" />
    </g>

    {/* isolator in steel blue */}
    <path d="M382.500 653V641H470" fill="none" stroke="#000" strokeWidth="3" />
    <g fill="#4a7686">
      <path d="M338 650.500H467V659.500H338z" />
      <path d="M345 646h13v17h-13z M447 646h12v17h-12z" />
      <path d="M389 647h6v3h14v-3h6v13h-26z" />
      <path d="M395 658h14v33h-14z M345 662h13v29h-13z M447 662h12v29h-12z" />
    </g>
    <path d="M396 664V691M408 664V691" stroke="#dfe27a" strokeWidth="2" />
    <path d="M396.600 640V649M407.600 640V649" stroke={yellow} strokeWidth="3.400" />
    <g fill="#10181e">
      <ellipse cx="351.700" cy="654" rx="2.300" ry="3.700" />
      <ellipse cx="453" cy="654" rx="2.300" ry="3.700" />
      <path d="M341 654.300h5v1.500h-5z M459 654.300h5v1.500h-5z" />
    </g>

    <g fontFamily="'Noto Sans', sans-serif">
      <text x="540.500" y="529" fontSize="34" fill="#fff" textAnchor="middle">A</text>
      <text x="339" y="642" fontSize="21" fill={yellow}>ISO</text>
    </g>
  </Drawing>
);

const StatusItem = ({ item }: { item: string }) => {
  if (item === 'caret') return <button aria-label="Options"><Caret /></button>;
  if (item === '1:1') return <button>1:1</button>;
  return <button aria-label={item}><Icon name={item} /></button>;
};

export default function App() {
  return (
    <Page>
      <GlobalStyle />
      <Header>
        <AppButton aria-label="Application menu">
          <svg width="24" height="28" viewBox="0 0 24 28" aria-hidden="true">
            <path d="M9 2h6l8 21-5 2-3-6H9l-3 6-5-2z" fill="#c4161c" />
            <path d="M9 2L1 23l5 2 6-14z" fill="#dc2a34" />
            <path d="M12 10l3 7H9z" fill="#9c1016" />
            <path d="M1 23l8-6h6l8 6-5 2-3-4H9l-3 4z" fill="#a30f1c" />
          </svg>
          <Caret color="#222" />
        </AppButton>
        <HeaderRows>
          <TitleBar>
            <QuickAccess>
              {quickButtons.map(([label, icon, w]) => (
                <QuickButton key={label} aria-label={label} $w={w}><Icon name={icon} /></QuickButton>
              ))}
              <QuickButton aria-label="Undo list" $w={12}><Caret /></QuickButton>
              <QuickButton aria-label="Redo"><Icon name="redo" size={14} /></QuickButton>
              <QuickButton aria-label="Redo list" $w={11}><Caret /></QuickButton>
            </QuickAccess>
            <Combo $w={168} $h={23}>
              <Icon name="gear" size={13} />
              <Select aria-label="Workspace"><option>Drafting &amp; Annotation</option></Select>
              <Caret />
            </Combo>
            <QuickButton aria-label="Sheet set"><Icon name="sheet" /></QuickButton>
            <QuickButton aria-label="Match"><Icon name="sheetBrush" /></QuickButton>
            <QuickButton aria-label="Customize" $w={18}><Icon name="dropBar" /></QuickButton>
            <DocTitle>Question 1.dwg</DocTitle>
            <QuickButton aria-label="Search options" $w={13}>
              <svg width="4" height="8" viewBox="0 0 4 8" aria-hidden="true"><path d="M0 0l4 4-4 4z" fill="#fff" /></svg>
            </QuickButton>
            <SearchInput aria-label="Search" placeholder="Type a keyword or phrase" />
            <QuickButton aria-label="Find" $w={24}><Icon name="binoculars" /></QuickButton>
            <SignIn><Icon name="person" /><span>Sign In</span><Caret /></SignIn>
            <QuickButton aria-label="Exchange" $w={18}><Icon name="exchange" size={14} /></QuickButton>
            <QuickButton aria-label="A360" $w={26}><Icon name="a360" size={15} /></QuickButton>
            <QuickButton aria-label="A360 options" $w={8}><Caret /></QuickButton>
            <Divider />
            <QuickButton aria-label="Help" $w={28}><Icon name="help" /></QuickButton>
            <QuickButton aria-label="Help options" $w={10}><Caret /></QuickButton>
            <WindowControls>
              <WindowButton aria-label="Minimize"><Icon name="winMin" /></WindowButton>
              <WindowButton aria-label="Restore"><Icon name="winMax" /></WindowButton>
              <WindowButton aria-label="Close"><Icon name="winClose" /></WindowButton>
            </WindowControls>
          </TitleBar>
          <RibbonTabs>
            {ribbonTabs.map(([label, w], i) => (
              <RibbonTab key={label} $w={w} $active={i === 0}>{label}</RibbonTab>
            ))}
            <RibbonTab $w={60} aria-label="Ribbon display">
              <Icon name="record" size={14} />&nbsp;&nbsp;<Caret />
            </RibbonTab>
          </RibbonTabs>
        </HeaderRows>
      </Header>

      <Ribbon>
        <RibbonPanel title="Draw" w={212}>
          <Big label="Line" icon="line" w={40} />
          <Big label="Polyline" icon="polyline" w={42} />
          <Big label="Circle" icon="circle" w={50} caret />
          <Big label="Arc" icon="arc" w={37} caret />
          <Columns columns={drawTools} />
        </RibbonPanel>
        <RibbonPanel title="Modify" w={124}><Columns columns={modifyTools} /></RibbonPanel>
        <RibbonPanel title="Annotation" w={140}>
          <Big label="Text" icon="text" w={44} caret />
          <Big label="Dimension" icon="dimension" w={56} />
          <Columns columns={annotationTools} />
        </RibbonPanel>
        <RibbonPanel title="Layers" w={256}>
          <Big label={'Layer\nProperties'} icon="layers" w={56} />
          <LayerStack>
            <Combo $w={196} $h={22}>
              <Icon name="bulb" />
              <Icon name="sun" size={14} />
              <Icon name="lock" size={14} />
              <Swatch />
              <Select aria-label="Layer"><option>Line</option></Select>
              <Caret />
            </Combo>
            {layerTools.map((row, i) => (
              <LayerRow key={i}>
                {row.map((name) => <LayerTool key={name} aria-label={name}><Icon name={name} /></LayerTool>)}
              </LayerRow>
            ))}
          </LayerStack>
        </RibbonPanel>
        <RibbonPanel title="Block" w={75}>
          <Big label="Insert" icon="insert" w={37} caret />
          <Columns columns={blockTools} />
        </RibbonPanel>
        <RibbonPanel title="Properties" w={208} launcher>
          <Big label={'Match\nProperties'} icon="match" w={58} />
          <PropertyList>
            <PropertyRow>
              <Icon name="colorWheel" />
              <Combo $w={128} $h={23} $gap={8}>
                <Swatch $m={9} />
                <Select aria-label="Object color"><option>ByLayer</option></Select>
                <Caret />
              </Combo>
            </PropertyRow>
            <PropertyRow>
              <Icon name="weight" />
              <Combo $w={128} $h={22} $pad={7} $gap={2}>
                <Rule $h={3} />
                <Select aria-label="Lineweight"><option>ByLayer</option></Select>
                <Caret />
              </Combo>
            </PropertyRow>
            <PropertyRow>
              <Icon name="linetype" />
              <Combo $w={128} $h={22} $pad={7} $gap={2}>
                <Rule $h={1} />
                <Select aria-label="Linetype"><option>ByLayer</option></Select>
                <Caret />
              </Combo>
            </PropertyRow>
          </PropertyList>
        </RibbonPanel>
        <RibbonPanel title="Groups" w={65}>
          <Big label="Group" icon="group" w={38} />
          <Columns columns={groupTools} />
        </RibbonPanel>
        <FoldedPanel $w={57}><BigIcon name="utilities" /><span>Utilities</span><Caret /></FoldedPanel>
        <FoldedPanel $w={57}><BigIcon name="clipboard" /><span>Clipboard</span><Caret /></FoldedPanel>
        <FoldedPanel $w={57}><BigIcon name="view" /><span>View</span><Caret /></FoldedPanel>
      </Ribbon>

      <FileTabs>
        <FileTab $w={115}>Start</FileTab>
        <FileTab $w={117} $active>
          Question 1*
          <svg width="8" height="8" viewBox="0 0 8 8" aria-hidden="true"><path d="M1 1l6 6M7 1L1 7" stroke="#8c8c8c" strokeWidth="1.800" /></svg>
        </FileTab>
        <AddTab aria-label="New tab"><Icon name="plus" size={13} /></AddTab>
      </FileTabs>

      <Viewport>
        <Model />
        <ViewLabels>
          <button>[−]</button><button>[Top]</button><button>[2D Wireframe]</button>
        </ViewLabels>
        <DocControls>
          <button aria-label="Minimize drawing"><Icon name="docMin" /></button>
          <button aria-label="Restore drawing"><Icon name="docMax" /></button>
          <button aria-label="Close drawing"><Icon name="docClose" /></button>
        </DocControls>
        <ViewCube>
          <svg width="92" height="98" viewBox="0 0 92 98" role="img" aria-label="View cube">
            <circle cx="47" cy="50" r="37.500" fill="none" stroke="#484a51" strokeWidth="8" />
            <path d="M29.500 32h35v36h-35z" fill="#b4b5bb" />
            <path d="M37 40h20v20H37z" fill="#adaeb4" />
            <g fontFamily="'Liberation Sans', sans-serif" fontWeight="700" fontSize="14" fill="#b9bac0" textAnchor="middle">
              <text x="47" y="15">N</text>
              <text x="47" y="96">S</text>
              <text x="8" y="55">W</text>
              <text x="86" y="55">E</text>
              <text x="47" y="53" fontSize="9" fill="#4a4b52">TOP</text>
            </g>
          </svg>
          <WcsButton>WCS</WcsButton>
        </ViewCube>
        <NavBar>
          <svg width="29" height="208" viewBox="0 0 29 208" aria-hidden="true">
            <g fill="none" stroke="#575961" strokeWidth="1.200">
              <circle cx="15" cy="29" r="10" />
              <path d="M10 24h9v9h-9z M22 2h4v4h-4z M20 200h5v4" />
              <path d="M22 62a9 9 0 1 0 1 14M9 67V62M13 67V62M17 67V62M16 72h8M16 76h7" />
              <path d="M5 90l14 14M19 90L5 104M20 104l6 8" />
              <circle cx="18" cy="102" r="5" />
              <path d="M15 127v24M4 139h22M11 131l4-4 4 4M11 147l4 4 4-4M8 135l-4 4 4 4M22 135l4 4-4 4" />
              <path d="M4 167h20v5H4z M9 167v5M14 167v5M19 167v5M4 176h14v12H4z M9 179l5 3-5 3z" />
            </g>
            <g fill="#50525a">
              <path d="M13 48h4l-2 3z M13 117h4l-2 3z M13 155h4l-2 3z" />
            </g>
          </svg>
        </NavBar>
        <UcsIcon width="90" height="90" viewBox="0 601 90 90" role="img" aria-label="UCS icon">
          <g fill="none" stroke="#c4c5ca" strokeWidth="1.500">
            <path d="M13.500 626V676.500H61" />
            <path d="M9.500 671.500h9v9h-9z" />
          </g>
          <g fontFamily="'Open Sans', sans-serif" fontSize="19" fontWeight="300" fill="#d0d1d6" textAnchor="middle">
            <text x="21" y="622">Y</text>
            <text x="71" y="676">X</text>
          </g>
        </UcsIcon>
        <CommandLine onSubmit={(e) => e.preventDefault()}>
          <CommandTools>
            <Grip />
            <button type="button" aria-label="Close command line"><Icon name="close" size={9} /></button>
            <button type="button" aria-label="Customize"><Icon name="wrench" size={13} /></button>
          </CommandTools>
          <CommandField>
            <Icon name="prompt" size={15} />
            <Caret color="#666" />
            <CommandInput aria-label="Command" placeholder="Type a command" />
            <svg width="6" height="4" viewBox="0 0 6 4" aria-hidden="true"><path d="M0 4h6L3 0z" fill="#222" /></svg>
          </CommandField>
        </CommandLine>
      </Viewport>

      <Footer>
        <LayoutTabs>
          <LayoutTab $w={56} $active>Model</LayoutTab>
          <LayoutTab $w={60}>Layout1</LayoutTab>
          <LayoutTab $w={60}>Layout2</LayoutTab>
          <LayoutTab $w={26} aria-label="New layout"><Icon name="plus" size={12} /></LayoutTab>
        </LayoutTabs>
        <StatusTools>
          <StatusGroup $w={197} $end>677020.9696, -45434.1802, 0.0000</StatusGroup>
          <StatusGroup $w={49}><button>MODEL</button></StatusGroup>
          {statusGroups.map((g, i) => (
            <StatusGroup key={i} $w={g.w}>
              {g.items.map((item, j) => <StatusItem key={j} item={item} />)}
            </StatusGroup>
          ))}
        </StatusTools>
      </Footer>
    </Page>
  );
}
